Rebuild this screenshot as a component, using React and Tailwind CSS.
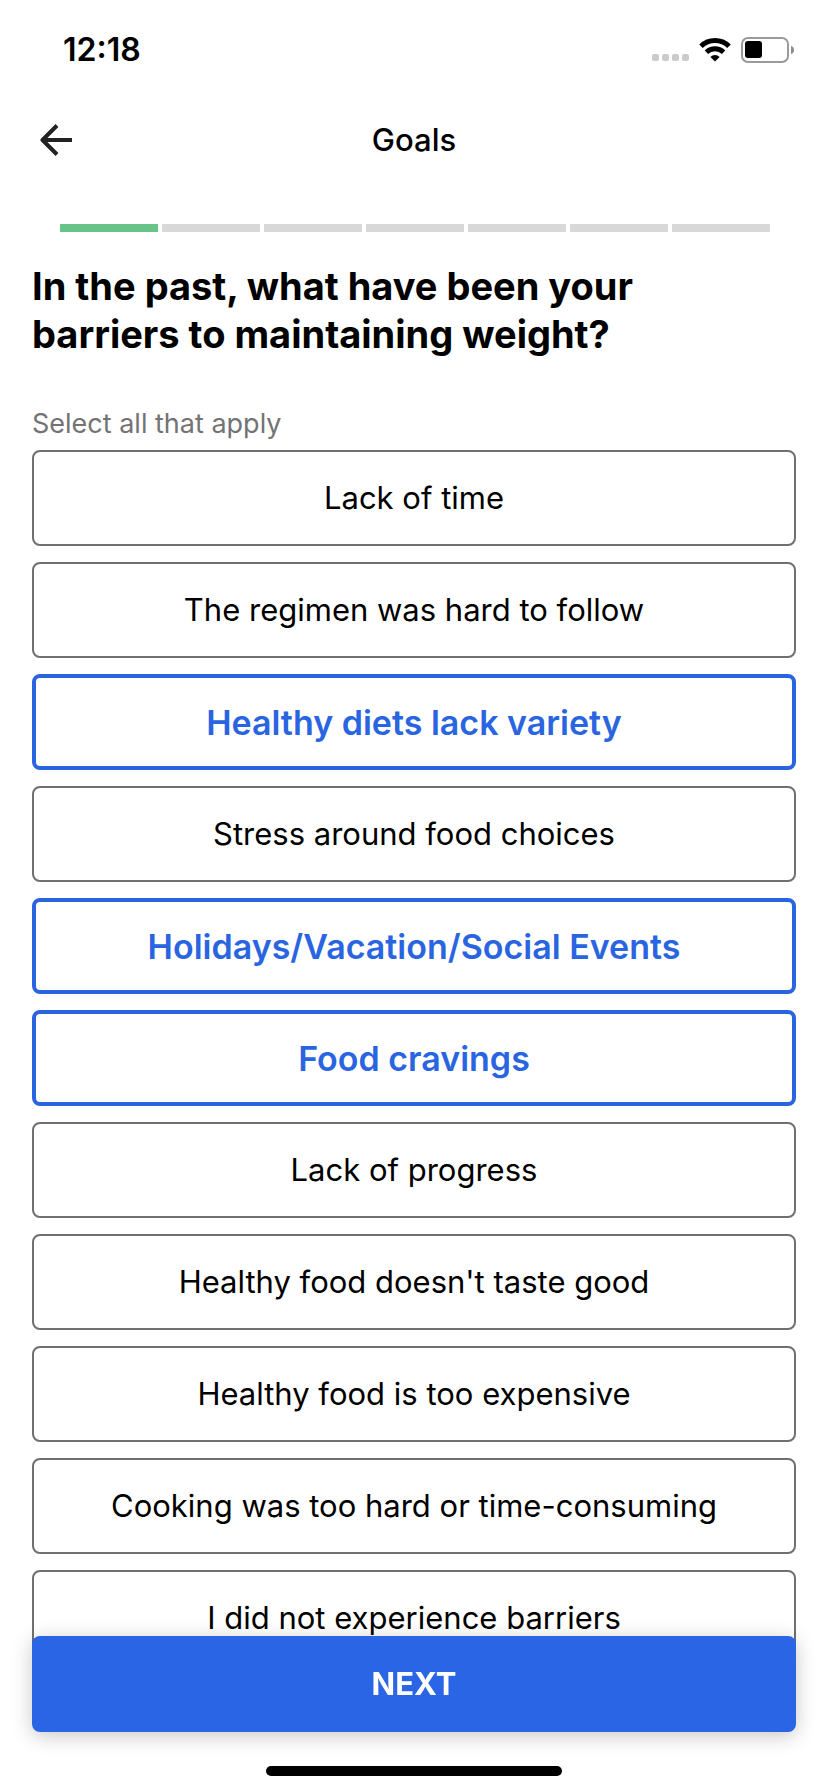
import React, { useState } from 'react';

const TOTAL_STEPS = 7;
const CURRENT_STEP = 1;

const barriers = [
  { id: 'time', label: 'Lack of time' },
  { id: 'regimen', label: 'The regimen was hard to follow' },
  { id: 'variety', label: 'Healthy diets lack variety' },
  { id: 'stress', label: 'Stress around food choices' },
  { id: 'events', label: 'Holidays/Vacation/Social Events' },
  { id: 'cravings', label: 'Food cravings' },
  { id: 'progress', label: 'Lack of progress' },
  { id: 'taste', label: "Healthy food doesn't taste good" },
  { id: 'expensive', label: 'Healthy food is too expensive' },
  { id: 'cooking', label: 'Cooking was too hard or time-consuming' },
  { id: 'none', label: 'I did not experience barriers' },
];

const StatusBar = () => (
  <div className="flex h-[100px] items-center justify-between pl-[63px] pr-[34px]">
    <span className="text-[32px] leading-10 font-semibold">12:18</span>

    <div className="flex items-center gap-2.5">
      <svg width="37" height="26" viewBox="0 0 37 26" fill="#cbcbcb" aria-hidden="true">
        <rect x="0" y="17" width="7" height="7" rx="2" />
        <rect x="10" y="17" width="7" height="7" rx="2" />
        <rect x="20" y="17" width="7" height="7" rx="2" />
        <rect x="30" y="17" width="7" height="7" rx="2" />
      </svg>
      <svg width="32" height="26" viewBox="0 0 32 26" aria-hidden="true">
        <path d="M2 9.2A20 20 0 0 1 30 9.2" fill="none" stroke="#000" strokeWidth="5" />
        <path d="M7.4 15.2A12.4 12.4 0 0 1 24.6 15.2" fill="none" stroke="#000" strokeWidth="4.8" />
        <path d="M16 24.4L11.4 19.9A6.6 6.6 0 0 1 20.6 19.9Z" fill="#000" />
      </svg>
      <svg width="53" height="26" viewBox="0 0 53 26" aria-hidden="true">
        <rect x="1" y="1" width="46" height="24" rx="6" fill="none" stroke="#9a9a9a" strokeWidth="2" />
        <rect x="4" y="4" width="17" height="17" rx="3" fill="#000" />
        <path d="M50 9C52 9.6 53 11 53 13S52 16.4 50 17Z" fill="#8e8e8e" />
      </svg>
    </div>
  </div>
);

const Header = () => (
  <header className="grid h-20 grid-cols-[1fr_auto_1fr] items-center px-8">
    <button type="button" aria-label="Back" className="flex size-12 items-center justify-center">
      <svg width="32" height="32" viewBox="0 0 32 32" fill="none" stroke="#222" strokeWidth="4" aria-hidden="true">
        <path d="M3 16H32" />
        <path d="M17 1.5L2.5 16L17 30.5" strokeLinejoin="round" />
      </svg>
    </button>
    <h1 className="text-[31px] leading-10 font-medium">Goals</h1>
  </header>
);

const StepProgress = () => (
  <div
    role="progressbar"
    aria-label="Progress"
    aria-valuemin={0}
    aria-valuemax={TOTAL_STEPS}
    aria-valuenow={CURRENT_STEP}
    className="mt-11 flex gap-1 pl-[60px] pr-[58px]"
  >
    {Array.from({ length: TOTAL_STEPS }, (_, i) => (
      <div key={i} className={`h-2 flex-1 ${i < CURRENT_STEP ? 'bg-[#68c388]' : 'bg-[#d8d8d9]'}`} />
    ))}
  </div>
);

const App = () => {
  const [selected, setSelected] = useState(['variety', 'events', 'cravings']);

  const toggle = (id) => {
    setSelected((prev) => (prev.includes(id) ? prev.filter((item) => item !== id) : [...prev, id]));
  };

  return (
    <div className="min-h-screen bg-white font-['Inter',sans-serif] text-black">
      <StatusBar />
      <Header />
      <StepProgress />

      <main className="px-8 pt-[30px] pb-28">
        <h2 className="max-w-[680px] text-[38px] leading-[48px] font-bold">
          In the past, what have been your barriers to maintaining weight?
        </h2>
        <p id="hint" className="mt-12 text-[27px] leading-9 text-[#737373]">
          Select all that apply
        </p>

        <div role="group" aria-labelledby="hint" className="mt-2 flex flex-col gap-4">
          {barriers.map(({ id, label }) => {
            const active = selected.includes(id);
            return (
              <button
                key={id}
                type="button"
                aria-pressed={active}
                onClick={() => toggle(id)}
                className={`flex h-24 items-center justify-center rounded-lg bg-white ${
                  active
                    ? 'border-4 border-[#2a65e1] text-[34px] font-semibold text-[#2a65e1]'
                    : 'border-2 border-[#707070] text-[31px]'
                }`}
              >
                {label}
              </button>
            );
          })}
        </div>
      </main>

      {/* Bottom action, stays over the list */}
      <footer className="fixed inset-x-0 bottom-0 flex flex-col items-center px-8 pb-4">
        <button
          type="button"
          className="h-24 w-full rounded-lg bg-[#2a65e5] text-[31px] font-bold text-white shadow-[0_4px_20px_rgba(0,0,0,0.22)]"
        >
          NEXT
        </button>
        <div className="mt-[34px] h-2.5 w-[296px] rounded-full bg-black" />
      </footer>
    </div>
  );
};

export default App;
